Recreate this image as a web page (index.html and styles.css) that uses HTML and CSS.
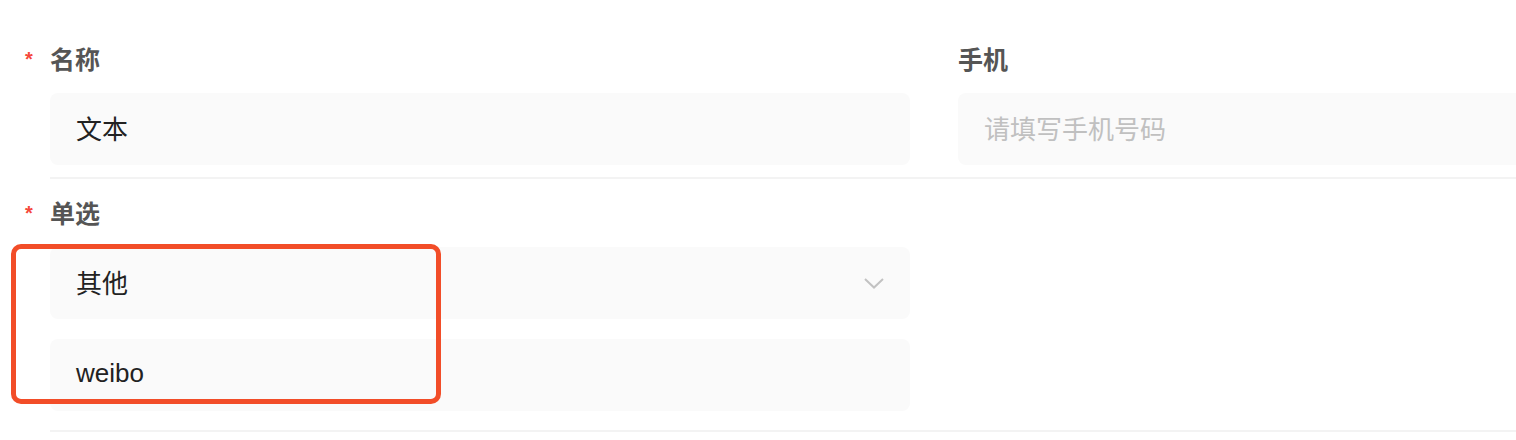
FILE: index.html
```html
<!DOCTYPE html>
<html lang="zh-CN">
<head>
<meta charset="utf-8">
<title>表单</title>
<link rel="stylesheet" href="styles.css">
</head>
<body>
<div class="form">
  <div class="row">
    <div class="item">
      <div class="label required"><span class="star">*</span><span>名称</span></div>
      <div class="field"><span class="value">文本</span></div>
    </div>
    <div class="item">
      <div class="label"><span>手机</span></div>
      <div class="field"><span class="placeholder">请填写手机号码</span></div>
    </div>
  </div>
  <div class="row row-tall">
    <div class="item">
      <div class="label required"><span class="star">*</span><span>单选</span></div>
      <div class="group">
        <div class="field select"><span class="value">其他</span>
          <svg class="chevron" width="20" height="11" viewBox="0 0 20 11"><path d="M1 1 L10 9.5 L19 1" fill="none" stroke="#c2c2c2" stroke-width="2"/></svg>
        </div>
        <div class="field extra"><span class="value latin">weibo</span></div>
        <div class="highlight"></div>
      </div>
    </div>
    <div class="item"></div>
  </div>
</div>
</body>
</html>
```
FILE: styles.css
```css
html, body {
  margin: 0;
  padding: 0;
  background: #ffffff;
  overflow: hidden;
}
body {
  padding-top: 25px;
  font-family: "Liberation Sans", "Noto Sans CJK SC", sans-serif;
}
.form {
  padding-left: 50px;
  overflow: hidden;
}
.row {
  display: grid;
  grid-template-columns: 860px 860px;
  column-gap: 48px;
  padding: 15px 0 12px;
  border-bottom: 2px solid #f3f3f3;
}
.row-tall {
  padding-bottom: 19px;
}
.label {
  display: flex;
  align-items: center;
  height: 36px;
  line-height: 36px;
  font-size: 25px;
  font-weight: 600;
  color: #555555;
  margin-bottom: 17px;
  font-family: "Noto Sans CJK SC", sans-serif;
}
.label.required {
  margin-left: -27px;
}
.star {
  width: 27px;
  padding-left: 2px;
  box-sizing: border-box;
  color: #f5483b;
  font-size: 20px;
  font-weight: 600;
  font-family: "Liberation Sans", sans-serif;
  padding-top: 2px;
}
.field {
  box-sizing: border-box;
  height: 72px;
  background: #fafafa;
  border-radius: 8px;
  display: flex;
  align-items: center;
  padding: 0 26px 4px;
  font-size: 26px;
  color: #222222;
}
.value {
  font-family: "Noto Sans CJK SC", sans-serif;
}
.value.latin {
  font-family: "Liberation Sans", "Noto Sans CJK SC", sans-serif;
}
.placeholder {
  color: #c0c0c0;
  font-family: "Noto Sans CJK SC", sans-serif;
}
.select {
  justify-content: space-between;
}
.chevron {
  margin-top: 4px;
}
.extra {
  margin-top: 20px;
}
.group {
  position: relative;
}
.highlight {
  position: absolute;
  left: -39px;
  top: -3px;
  width: 420px;
  height: 150px;
  border: 5px solid #f24d28;
  border-radius: 10px;
  pointer-events: none;
}
```
